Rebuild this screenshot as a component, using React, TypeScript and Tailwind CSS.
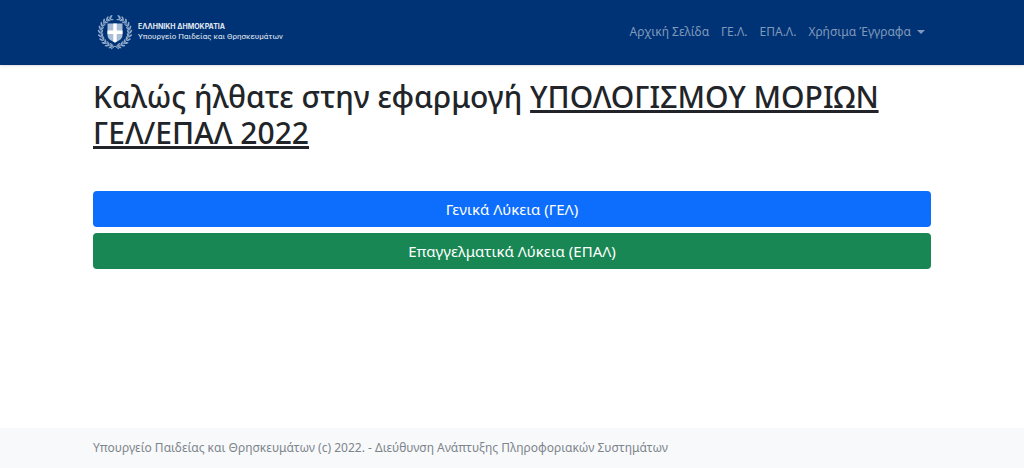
const navLinks = ["Αρχική Σελίδα", "ΓΕ.Λ.", "ΕΠΑ.Λ."];

// Leaves of one half of the wreath, from the bottom knot up to the open top
const leafAngles = [12, 27, 42, 57, 72, 87, 102, 117, 132, 147, 161];

function WreathHalf() {
  return (
    <g>
      <path d="M21 35.5A14.5 14.5 0 0 0 25 7.2" fill="none" stroke="#8ea8ca" strokeWidth="1" />
      {leafAngles.map((angle) => (
        <g key={angle} transform={`rotate(${-angle} 21 21)`}>
          <ellipse cx="22" cy="36.7" rx="2.3" ry="0.9" transform="rotate(32 22 36.7)" />
          <ellipse cx="22" cy="33.9" rx="2" ry="0.7" transform="rotate(-28 22 33.9)" />
        </g>
      ))}
    </g>
  );
}

function Emblem() {
  return (
    <svg viewBox="3 3 36 36" className="size-9 shrink-0" fill="#8ea8ca" aria-hidden="true">
      <WreathHalf />
      <g transform="translate(42 0) scale(-1 1)">
        <WreathHalf />
      </g>
      <path d="M20 36l-3 2M22 36l3 2" stroke="#8ea8ca" strokeWidth="1" />
      <path d="M13.5 12.5h15v11.2c0 4-3 5.8-7.5 7.8-4.5-2-7.5-3.8-7.5-7.8z" fill="#a9bdd8" />
      <path d="M19.3 12.5h3.4v7h5.8v3.4h-5.8v7.8l-1.7.8-1.7-.8v-7.8h-5.8v-3.4h5.8z" fill="#fff" />
    </svg>
  );
}

function Header() {
  return (
    <header className="bg-[#003375] shadow-sm shadow-black/10">
      <div className="mx-auto flex min-h-[65px] max-w-[838px] flex-wrap items-center justify-between px-1 pb-0.5">
        <a href="#" className="flex items-center gap-1 text-[#e3eaf3]">
          <Emblem />
          <span className="flex flex-col pl-px leading-[10px]">
            <span className="font-['Inter',sans-serif] text-[7px] font-bold">ΕΛΛΗΝΙΚΗ ΔΗΜΟΚΡΑΤΙΑ</span>
            <span className="font-['Roboto',sans-serif] text-[8px]">Υπουργείο Παιδείας και Θρησκευμάτων</span>
          </span>
        </a>
        <nav className="flex flex-wrap items-center gap-3 text-xs text-[#8099ba]">
          {navLinks.map((label) => (
            <a key={label} href="#" className="hover:text-white">
              {label}
            </a>
          ))}
          <button type="button" className="flex items-center gap-1.5 pr-0.5 hover:text-white">
            Χρήσιμα Έγγραφα
            <svg viewBox="0 0 8 4" className="h-1 w-2" fill="currentColor" aria-hidden="true">
              <path d="M0 0h8L4 4z" />
            </svg>
          </button>
        </nav>
      </div>
    </header>
  );
}

export default function App() {
  return (
    <div className="flex min-h-screen flex-col bg-white font-['Noto_Sans',sans-serif] text-[#212529]">
      <Header />
      <main className="mx-auto w-full max-w-[838px] grow pt-3.5">
        <h1 className="text-[30px] leading-9 font-medium">
          Καλώς ήλθατε στην εφαρμογή{" "}
          <u className="decoration-3 underline-offset-2">ΥΠΟΛΟΓΙΣΜΟΥ ΜΟΡΙΩΝ ΓΕΛ/ΕΠΑΛ 2022</u>
        </h1>
        <div className="mt-10 flex flex-col gap-1.5">
          <button type="button" className="h-9 rounded bg-[#0d6efd] text-[15px] text-white hover:bg-[#0b5ed7]">
            Γενικά Λύκεια (ΓΕΛ)
          </button>
          <button type="button" className="h-9 rounded bg-[#198754] text-[15px] text-white hover:bg-[#157347]">
            Επαγγελματικά Λύκεια (ΕΠΑΛ)
          </button>
        </div>
      </main>
      <footer className="bg-[#f8f9fa] py-3 text-xs text-[#7d858c]">
        <p className="mx-auto max-w-[838px]">
          Υπουργείο Παιδείας και Θρησκευμάτων (c) 2022. - Διεύθυνση Ανάπτυξης Πληροφοριακών Συστημάτων
        </p>
      </footer>
    </div>
  );
}
